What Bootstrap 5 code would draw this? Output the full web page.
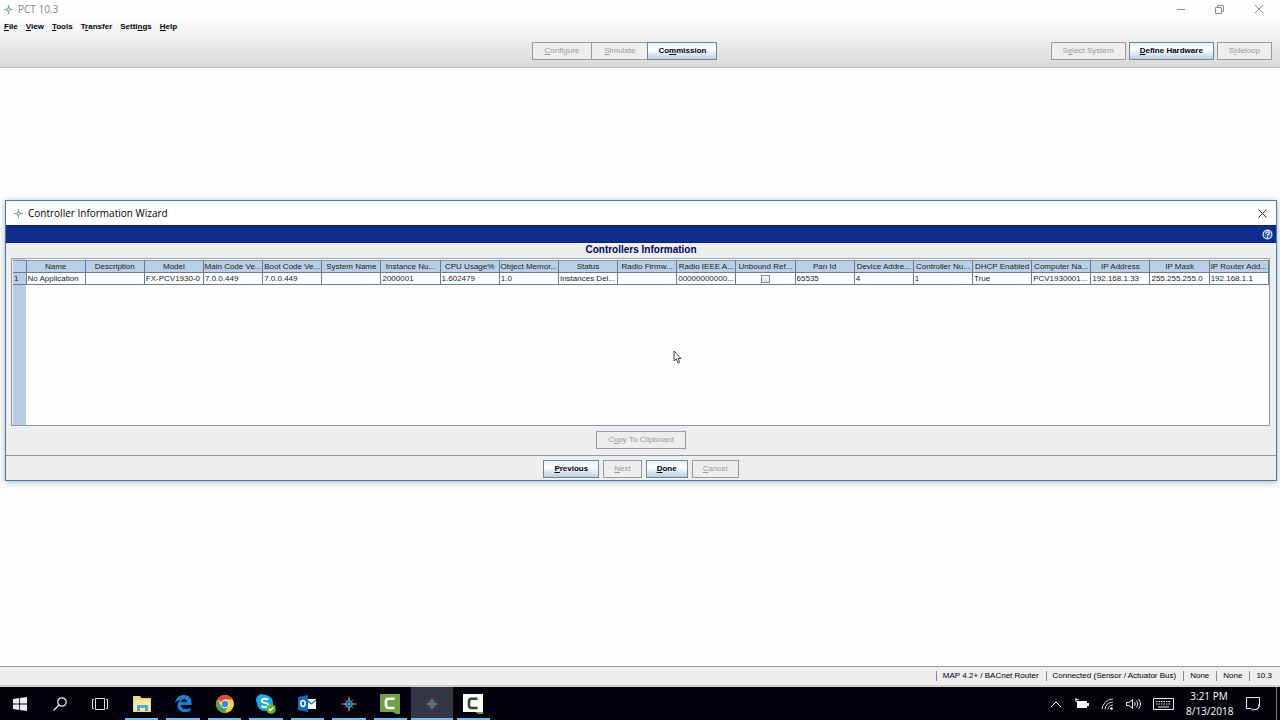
<!DOCTYPE html>
<html lang="en">
<head>
<meta charset="utf-8">
<meta name="viewport" content="width=device-width, initial-scale=1">
<title>PCT 10.3</title>
<link rel="stylesheet" href="https://cdn.jsdelivr.net/npm/bootstrap@5.3.0/dist/css/bootstrap.min.css">
<style>
  body { font: 8px/12px "Liberation Sans", Arial, sans-serif; color: #000; background: #fdfdfd; }
  svg { display: block; flex: none; }
  .ui-font { font-family: "Open Sans", "Noto Sans", sans-serif; font-size: 10px; }

  /* application header */
  .app-head { background: linear-gradient(#fff 0, #fcfcfc 18px, #f4f4f5 32px, #d9d9da 100%); border-bottom: 1px solid #c4c4c4; height: 68px; }
  .title-row { height: 18px; padding: 0 16px 0 4px; color: #868686; gap: 5px; }
  .menu-row { height: 17px; padding-left: 4px; gap: 8px; font-weight: 700; }
  .menu-row a { color: #000; text-decoration: none; }
  .tool-row { padding: 7px 8px 0 0; }
  .tool-row .jbtn:disabled { --bs-btn-padding-x: 11px; }
  .mode-group { margin-right: 23px; }
  .tool-row .mode-group .jbtn:disabled { --bs-btn-padding-x: 12px; }
  .mode-group .jbtn + .jbtn { margin-left: -1px; }

  .jbtn { --bs-btn-padding-x: 10px; --bs-btn-padding-y: 2px; --bs-btn-font-size: 8px; --bs-btn-line-height: 12px;
    --bs-btn-border-radius: 0; --bs-btn-font-weight: 700; --bs-btn-color: #000; --bs-btn-border-color: #72859b;
    --bs-btn-hover-border-color: #50688a; --bs-btn-disabled-color: #999; --bs-btn-disabled-border-color: #9b9b9d; --bs-btn-disabled-opacity: 1;
    height: 18px; background: linear-gradient(#e4edf6 0, #fff 35%, #f4f8fc 50%, #b9cfe5 100%); }
  .jbtn:disabled { background: #eeeeef; font-weight: 400; }

  /* wizard window */
  .wizard { margin: 132px 3px 0 5px; border: 1px solid #3a7db8; background: #eee; box-shadow: 0 1px 6px rgba(0,0,0,.3); }
  .wizard-title { height: 24px; padding: 0 9px 0 8px; background: #fff; gap: 5px; }
  .wizard-band { height: 18px; padding-right: 3px; background: #102d8b; border-top: 1px solid #0a2270; border-bottom: 1px solid #0a2270; }
  .wizard-caption { margin: 0; padding-top: 1px; height: 15px; font: 700 10px/12px "Liberation Sans", Arial, sans-serif; color: #000066; }
  .grid-pane { margin: 0 6px 0 5px; height: 168px; padding: 1px 0 0 1px; border: 1px solid #8b98a7;
    background: linear-gradient(to right, #eee 1px, #b8cde2 1px, #b8cde2 14px, #fdfdfd 14px); border-top-color: #9ba8b5; }
  .ctl-grid { width: 100%; table-layout: fixed; border-collapse: collapse; }
  .ctl-grid th, .ctl-grid td { height: 12px; padding: 0 1px; line-height: 11px; font-weight: 400; white-space: nowrap; overflow: hidden;
    border-right: 1px solid #687b90; border-bottom: 1px solid #687b90; color: #222; }
  .ctl-grid thead th { text-align: center; padding: 0; background: #b8cfe5; border-top: 1px solid #8798aa; }
  .ctl-grid tbody td { background: #fff; }
  .ctl-grid tbody th { background: #b8cde2; }
  .ctl-grid .num-col { width: 13px; }
  .tick { appearance: none; width: 9px; height: 8px; margin: 1px auto; border: 1px solid #888; background: linear-gradient(#fff, #ddd); }
  .copy-row { height: 30px; padding-top: 5px; border-bottom: 1px solid #8b98a7; }
  .copy-row .jbtn { --bs-btn-padding-x: 11px; }
  .nav-btns { height: 24px; padding-top: 4px; gap: 4px; }
  .pointer-mark { left: 673px; top: 350px; pointer-events: none; }

  /* status bar and taskbar */
  .status-row { height: 21px; background: #eee; border-top: 1px solid #999; border-bottom: 2px solid #d0d0d0; padding-right: 8px; }
  .status-row span { border-left: 1px solid #888; padding-left: 6px; margin-left: 7px; line-height: 10px; }
  .taskbar { height: 33px; background: #02020f; color: #fff; }
  .sys-btns { width: 121px; }
  .sys-btns .task, .apps .task { background: none; border: 0; padding: 0; }
  .sys-btns .task { width: 40px; }
  .apps { display: grid; grid-template-columns: repeat(9, 1fr); width: 373px; }
  .apps .task { position: relative; }
  .apps .task::after { content: ""; position: absolute; left: 4px; right: 4px; bottom: 0; height: 2px; background: #76bce8; }
  .apps .current { background: #343646; }
  .apps .current::after { left: 0; right: 0; }
  .tray { gap: 12px; padding-right: 3px; }
  .clock { line-height: 15px; width: 46px; margin-right: 2px; white-space: nowrap; }
  .notify { border-right: 1px solid #777; padding-right: 16px; }
</style>
</head>
<body class="d-flex flex-column min-vh-100">
<svg width="0" height="0" class="position-absolute" aria-hidden="true">
  <symbol id="compass" viewBox="0 0 20 20">
    <path d="M10 0l1.200 6H8.800zM10 20l1.200-6H8.800zM0 10l6-1.200v2.400zM20 10l-6-1.200v2.400z" fill="#e8743c"/>
    <path d="M5 5l2.500 2.500M15 5l-2.500 2.500M5 15l2.500-2.500M15 15l-2.500-2.500" stroke="#b96847"/>
    <circle cx="10" cy="10" r="3.500" fill="#113650" stroke="#35a8c7" stroke-width="1.500"/>
    <circle cx="10" cy="10" r="1.500" fill="#56ceeb"/>
  </symbol>
  <symbol id="smallmark" viewBox="0 0 10 10">
    <path d="M5 0v3M5 7v3" stroke="#d0805c" stroke-width="1.200"/><path d="M0 5h3M7 5h3" stroke="#8aa49c" stroke-width="1.200"/>
    <circle cx="5" cy="5" r="2" fill="#c7e9ef" stroke="#4aa3b9"/>
  </symbol>
</svg>

<header class="app-head">
  <div class="title-row ui-font d-flex align-items-center">
    <svg width="9" height="9"><use href="#smallmark"/></svg>
    <span>PCT 10.3</span>
    <svg class="ms-auto" width="88" height="12" fill="none" stroke="#8c8c8c">
      <path d="M1 6.500h8M39.500 4.500h6v6h-6zM41.500 4.500v-2h6v6h-2M79 2l8 8M87 2l-8 8"/>
    </svg>
  </div>
  <nav class="menu-row d-flex align-items-center">
    <a href="#"><u>F</u>ile</a><a href="#"><u>V</u>iew</a><a href="#"><u>T</u>ools</a><a href="#">T<u>r</u>ansfer</a><a href="#">Setti<u>n</u>gs</a><a href="#"><u>H</u>elp</a>
  </nav>
  <div class="tool-row d-flex">
    <div class="flex-fill w-50"></div>
    <div class="mode-group d-flex flex-shrink-0">
      <button class="btn jbtn" disabled><u>C</u>onfigure</button>
      <button class="btn jbtn" disabled><u>S</u>imulate</button>
      <button class="btn jbtn">Co<u>m</u>mission</button>
    </div>
    <div class="flex-fill w-50 d-flex justify-content-end" style="gap:3px">
      <button class="btn jbtn" disabled>S<u>e</u>lect System</button>
      <button class="btn jbtn"><u>D</u>efine Hardware</button>
      <button class="btn jbtn" disabled>S<u>i</u>deloop</button>
    </div>
  </div>
</header>

<main class="flex-grow-1">
  <section class="wizard" aria-label="Controller Information Wizard">
    <div class="wizard-title ui-font d-flex align-items-center">
      <svg width="9" height="9"><use href="#smallmark"/></svg>
      <span>Controller Information Wizard</span>
      <button class="ms-auto border-0 bg-transparent p-0" aria-label="Close"><svg width="9" height="9" stroke="#222"><path d="M.5.5l8 8M8.500.5l-8 8"/></svg></button>
    </div>
    <div class="wizard-band d-flex align-items-center justify-content-end">
      <button class="border-0 bg-transparent p-0" aria-label="Help"><svg width="11" height="11"><circle cx="5.500" cy="5.500" r="5" fill="#dfeaf8"/><circle cx="5.500" cy="5.500" r="3.800" fill="#2c5cad"/><path d="M3.800 4.500Q4 2.800 5.700 2.800T7.300 4.200Q7.300 5 5.500 6v.7M5.500 7.500v1.200" fill="none" stroke="#fff" stroke-width="1.200"/></svg></button>
    </div>
    <h1 class="wizard-caption text-center">Controllers Information</h1>
    <div class="grid-pane">
      <table class="ctl-grid">
        <thead><tr>
          <th class="num-col"></th><th>Name</th><th>Description</th><th>Model</th><th>Main Code Ve...</th><th>Boot Code Ve...</th><th>System Name</th><th>Instance Nu...</th><th>CPU Usage%</th><th>Object Memor...</th><th>Status</th><th>Radio Firmw...</th><th>Radio IEEE A...</th><th>Unbound Ref...</th><th>Pan Id</th><th>Device Addre...</th><th>Controller Nu...</th><th>DHCP Enabled</th><th>Computer Na...</th><th>IP Address</th><th>IP Mask</th><th>IP Router Add...</th>
        </tr></thead>
        <tbody><tr>
          <th>1</th><td>No Application</td><td></td><td>FX-PCV1930-0</td><td>7.0.0.449</td><td>7.0.0.449</td><td></td><td>2000001</td><td>1.602479</td><td>1.0</td><td>Instances Del...</td><td></td><td>00000000000...</td><td><input type="checkbox" class="tick d-block" aria-label="Unbound Reference"></td><td>65535</td><td>4</td><td>1</td><td>True</td><td>PCV1930001...</td><td>192.168.1.33</td><td>255.255.255.0</td><td>192.168.1.1</td>
        </tr></tbody>
      </table>
    </div>
    <div class="copy-row text-center"><button class="btn jbtn" disabled>C<u>o</u>py To Clipboard</button></div>
    <div class="nav-btns d-flex justify-content-center">
      <button class="btn jbtn"><u>P</u>revious</button>
      <button class="btn jbtn" disabled><u>N</u>ext</button>
      <button class="btn jbtn"><u>D</u>one</button>
      <button class="btn jbtn" disabled><u>C</u>ancel</button>
    </div>
  </section>
  <svg class="pointer-mark position-absolute" width="9" height="14"><path d="M1 1v10l2.300-2 1.700 4 1.700-.8L5 8.500h3z" fill="#fff" stroke="#333" stroke-width=".9"/></svg>
</main>

<footer>
  <div class="status-row d-flex align-items-center justify-content-end">
    <span>MAP 4.2+ / BACnet Router</span><span>Connected (Sensor / Actuator Bus)</span><span>None</span><span>None</span><span>10.3</span>
  </div>
  <div class="taskbar d-flex">
    <div class="sys-btns d-flex">
      <button class="task d-flex align-items-center justify-content-center" aria-label="Start"><svg width="14" height="14" fill="#eee"><path d="M0 2l6-.9v5.500H0zM6.800 1L14 0v6.600H6.800zM0 7.400h6v5.500L0 12zM6.800 7.400H14V14l-7.200-1z"/></svg></button>
      <button class="task d-flex align-items-center justify-content-center" aria-label="Search"><svg width="14" height="14" fill="none" stroke="#eee" stroke-width="1.200"><circle cx="9" cy="5" r="4.200"/><path d="M6 8L.5 13.500"/></svg></button>
      <button class="task d-flex align-items-center justify-content-center" aria-label="Task view"><svg width="16" height="14" fill="none" stroke="#ddd"><path d="M3.500 1.500h9v11h-9zM2 2.500H.5v9H2M14 2.500h1.500v9H14"/></svg></button>
    </div>
    <div class="apps">
      <button class="task d-flex align-items-center justify-content-center" aria-label="File Explorer"><svg width="18" height="16"><path d="M0 0h7l1.500 2H18v14H0z" fill="#f2d675"/><path d="M1 4h16v11H1z" fill="#fbe9a2"/><path d="M4 15V9h11v6h-3v-3H7v3z" fill="#45aedb"/></svg></button>
      <button class="task d-flex align-items-center justify-content-center" aria-label="Edge"><svg width="17" height="17"><path d="M0 8C1 2.500 4.500 0 9 0c5 0 7.500 3.500 7.500 8v2H6c.2 3 2.200 4 4.700 4 2 0 3.500-.5 4.800-1.300V16c-1.500.7-3.300 1-5.300 1C5.500 17 2.500 14.500 2.500 10.500c0-2.600 1.300-4.500 3.500-5.800C4 5 1.700 6 0 8zm6.200-1h5.600c0-2-1-3-2.700-3C7.500 4 6.500 5.200 6.200 7z" fill="#1c80d8"/></svg></button>
      <button class="task d-flex align-items-center justify-content-center" aria-label="Chrome"><svg width="18" height="18"><circle cx="9" cy="9" r="9" fill="#f8ce3a"/><path d="M9 9L1.200 4.500A9 9 0 0 1 16.800 4.500H9z" fill="#db4a3d"/><path d="M1.200 4.500A9 9 0 0 0 8.500 18L12.500 11 9 9 5 11z" fill="#40a35a"/><circle cx="9" cy="9" r="4.200" fill="#fff"/><circle cx="9" cy="9" r="3.300" fill="#3f83e8"/></svg></button>
      <button class="task d-flex align-items-center justify-content-center" aria-label="Skype"><svg width="20" height="20"><circle cx="6" cy="6" r="6" fill="#1ba9e4"/><circle cx="9" cy="9" r="8" fill="#1ba9e4"/><circle cx="12" cy="12" r="5" fill="#1ba9e4"/><path d="M12 5.800C11 4.300 5.800 4 5.800 6.700c0 2.900 6.500 1.500 6.500 4.300 0 2.900-5.300 2.800-6.800.8" fill="none" stroke="#fff" stroke-width="2"/><circle cx="15" cy="15" r="4.800" fill="#68b62d"/><path d="M12.800 15l1.500 1.500 3-3" fill="none" stroke="#fff" stroke-width="1.300"/></svg></button>
      <button class="task d-flex align-items-center justify-content-center" aria-label="Outlook"><svg width="18" height="17"><path d="M9 4h9v10H9z" fill="#fff"/><path d="M9 5l4.500 4L18 5" fill="none" stroke="#1b6cb8" stroke-width="1.300"/><path d="M0 2l10-2v17L0 15z" fill="#1169bb"/><ellipse cx="5" cy="8.500" rx="2.200" ry="2.900" fill="none" stroke="#fff" stroke-width="1.500"/></svg></button>
      <button class="task d-flex align-items-center justify-content-center" aria-label="PCT"><svg width="18" height="18"><use href="#compass"/></svg></button>
      <button class="task d-flex align-items-center justify-content-center" aria-label="Camtasia"><svg width="20" height="20"><path d="M0 0h20v20h-4l-3-2H0z" fill="#6fa044"/><path d="M14.500 4.800H8.500Q6 4.800 6 7.500v3.500Q6 14 8.500 14h6" fill="none" stroke="#fff" stroke-width="2.600"/></svg></button>
      <button class="task current d-flex align-items-center justify-content-center" aria-label="PCT wizard"><svg width="14" height="14"><use href="#compass"/></svg></button>
      <button class="task d-flex align-items-center justify-content-center" aria-label="Camtasia Recorder"><svg width="20" height="20"><path d="M0 0h20v20h-4l-3-2H0z" fill="#fff"/><path d="M14.500 4.800H8.500Q6 4.800 6 7.500v3.500Q6 14 8.500 14h6" fill="none" stroke="#33432a" stroke-width="2.600"/><path d="M13 18l3 2h4v-2z" fill="#70a14a"/></svg></button>
    </div>
    <div class="tray d-flex align-items-center ms-auto">
      <svg width="12" height="8" fill="none" stroke="#fff"><path d="M1 7l5-5 5 5"/></svg>
      <svg width="15" height="11"><path d="M3 3h10v7H3zM13 5h2v3h-2z" fill="#fff"/><path d="M1 1.500h4M2 0v4M2 3l2 2" stroke="#ddd" fill="none"/></svg>
      <svg width="13" height="13" fill="none" stroke="#ccc"><path d="M1 12.500A11 11 0 0 1 12 2M4 12.500A8 8 0 0 1 12 5M7 12.500a5 5 0 0 1 5-4.500"/><circle cx="10.500" cy="11.500" r="1" fill="#fff"/></svg>
      <svg width="15" height="12" fill="none" stroke="#eee"><path d="M.5 4.500H3L6.500 1.500v9L3 7.500H.5zM8.500 4q1.500 2 0 4M10.500 2.500q3 3.500 0 7M12.500 1q4 5 0 10"/></svg>
      <svg width="21" height="12" fill="none" stroke="#eee"><path d="M.5.5h20v11H.5z"/><path d="M3 3.500h15M3 6h15" stroke-dasharray="1.500 1"/><path d="M5 9h11"/></svg>
      <div class="clock ui-font text-center">3:21 PM<br>8/13/2018</div>
      <div class="notify d-flex align-items-center align-self-stretch"><svg width="14" height="14" fill="none" stroke="#eee"><path d="M5 11.500H.5V.5h13V8M5 11.500l2 2v-2"/><path d="M8 12.500a4 4 0 0 0 5-5 4 4 0 0 1-5 5z"/></svg></div>
    </div>
  </div>
</footer>
<script src="https://cdn.jsdelivr.net/npm/bootstrap@5.3.0/dist/js/bootstrap.bundle.min.js"></script>
</body>
</html>
